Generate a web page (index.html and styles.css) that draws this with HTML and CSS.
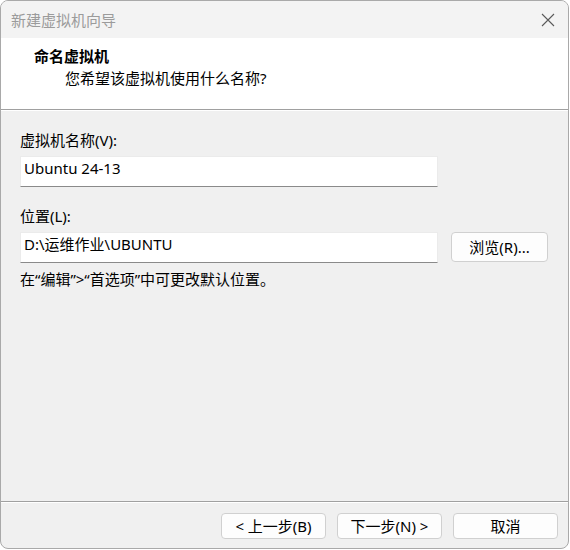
FILE: index.html
```html
<!DOCTYPE html>
<html lang="zh-CN">
<head>
<meta charset="utf-8">
<title>新建虚拟机向导</title>
<link rel="stylesheet" href="styles.css">
</head>
<body>
<div class="window">
  <div class="titlebar">
    <span class="title">新建虚拟机向导</span>
    <svg class="close" width="14" height="14" viewBox="0 0 14 14" aria-hidden="true">
      <path d="M1 1 L13 13 M13 1 L1 13" stroke="#5a5a5a" stroke-width="1.1" fill="none"/>
    </svg>
  </div>
  <div class="header">
    <div class="head-title">命名虚拟机</div>
    <div class="head-sub">您希望该虚拟机使用什么名称?</div>
  </div>
  <div class="sep"></div>
  <div class="content">
    <div class="label">虚拟机名称(V):</div>
    <div class="field wide">Ubuntu 24-13</div>
    <div class="label second">位置(L):</div>
    <div class="row">
      <div class="field wide">D:\运维作业\UBUNTU</div>
      <div class="btn browse">浏览(R)...</div>
    </div>
    <div class="hint">在“编辑”&gt;“首选项”中可更改默认位置。</div>
  </div>
  <div class="sep"></div>
  <div class="footer">
    <div class="btn action">&lt; 上一步(B)</div>
    <div class="btn action">下一步(N) &gt;</div>
    <div class="btn action">取消</div>
  </div>
</div>
</body>
</html>
```
FILE: styles.css
```css
html, body {
  margin: 0;
  padding: 0;
  background: #ffffff;
}
body {
  font-family: "Noto Sans", "Noto Sans CJK SC", sans-serif;
  font-size: 15px;
  color: #000;
}
.window {
  box-sizing: border-box;
  width: 569px;
  height: 549px;
  border: 1px solid #a9a9a9;
  border-radius: 8px;
  overflow: hidden;
  background: #f0f0f0;
  display: flex;
  flex-direction: column;
}
.titlebar {
  height: 37px;
  flex: none;
  background: #f3f3f3;
  display: flex;
  align-items: center;
  justify-content: space-between;
  padding: 0 13px 0 10px;
}
.title {
  color: #9b9b9b;
  line-height: 20px;
}
.close {
  display: block;
}
.header {
  flex: none;
  height: 71px;
  box-sizing: border-box;
  background: #ffffff;
  padding-top: 8px;
}
.head-title {
  font-weight: bold;
  line-height: 20px;
  padding-left: 33px;
}
.head-sub {
  line-height: 20px;
  margin-top: 2px;
  padding-left: 64px;
}
.sep {
  flex: none;
  height: 0;
  border-top: 1px solid #a0a0a0;
  border-bottom: 1px solid #ffffff;
}
.content {
  flex: 1;
  padding: 19px 0 0 19px;
}
.label {
  line-height: 20px;
}
.label.second {
  margin-top: 19px;
}
.field {
  box-sizing: border-box;
  height: 31px;
  margin-top: 6px;
  background: #ffffff;
  border: 1px solid #ebebeb;
  border-bottom: 1px solid #8a8a8a;
  padding: 1px 0 0 3px;
  line-height: 20px;
  white-space: nowrap;
}
.wide {
  width: 418px;
}
.row {
  display: flex;
  align-items: flex-start;
  gap: 13px;
}
.btn {
  box-sizing: border-box;
  background: #fdfdfd;
  border: 1px solid #d0d0d0;
  border-radius: 4px;
  display: flex;
  align-items: center;
  justify-content: center;
  line-height: 20px;
  white-space: nowrap;
}
.browse {
  width: 97px;
  height: 30px;
  margin-top: 6px;
}
.hint {
  line-height: 20px;
  margin-top: 6px;
}
.footer {
  flex: none;
  height: 45px;
  box-sizing: border-box;
  padding: 10px 10px 0 0;
  display: flex;
  justify-content: flex-end;
  align-items: flex-start;
  gap: 11px;
}
.action {
  width: 105px;
  height: 26px;
}
```
